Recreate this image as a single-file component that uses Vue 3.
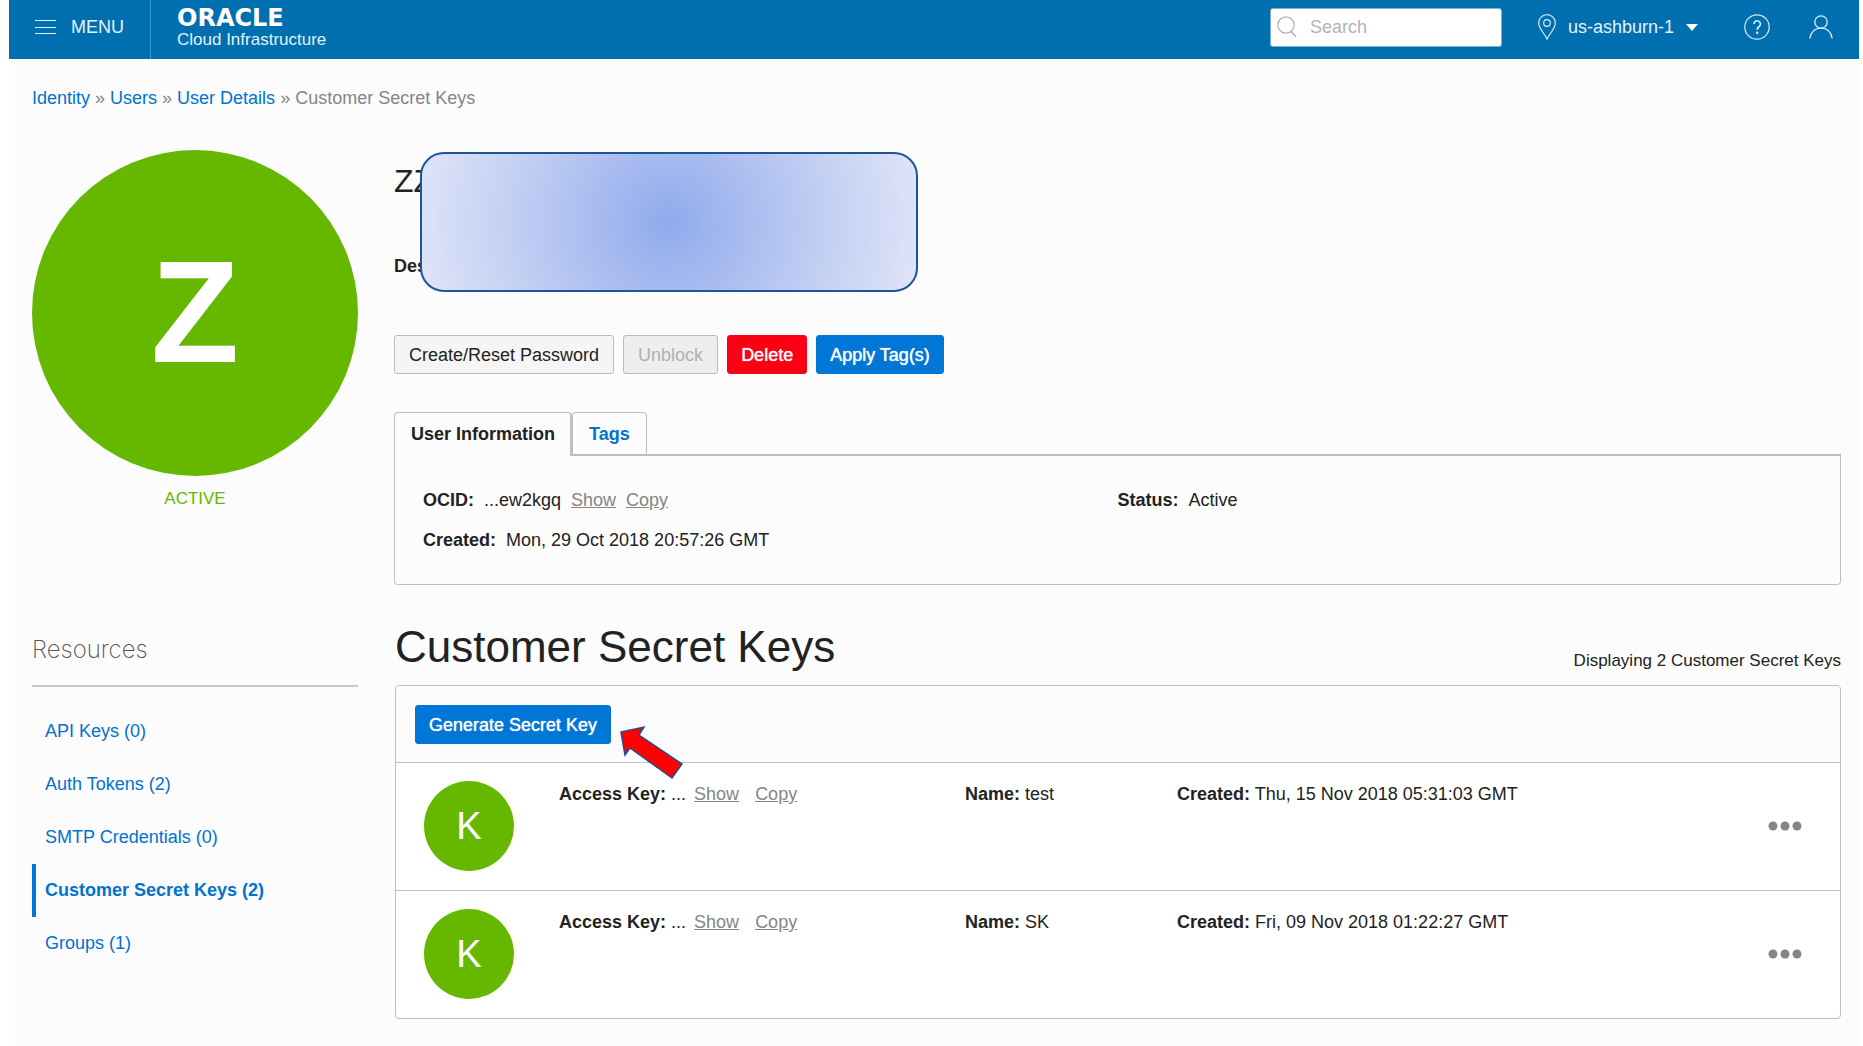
<script setup>
import { ref } from 'vue'

const search = ref('')

const resources = [
  { label: 'API Keys (0)' },
  { label: 'Auth Tokens (2)' },
  { label: 'SMTP Credentials (0)' },
  { label: 'Customer Secret Keys (2)', active: true },
  { label: 'Groups (1)' },
]

const keys = [
  { name: 'test', created: 'Thu, 15 Nov 2018 05:31:03 GMT' },
  { name: 'SK', created: 'Fri, 09 Nov 2018 01:22:27 GMT' },
]
</script>

<template>
  <div class="page">
    <header class="topbar">
      <button type="button" class="menu">
        <svg width="21" height="16" viewBox="0 0 21 16" aria-hidden="true">
          <path d="M0 1.5H21M0 8.5H21M0 14.5H21" stroke="#e3f2fa" stroke-width="1" fill="none" />
        </svg>
        MENU
      </button>
      <a href="#" class="brand">
        <span class="brand-name">ORACLE</span>
        <span class="brand-product">Cloud Infrastructure</span>
      </a>
      <div class="tools">
        <label class="search">
          <svg width="20" height="24" viewBox="0 0 20 24" aria-hidden="true">
            <circle cx="9" cy="10" r="8.200" fill="none" stroke="#adadad" stroke-width="1.200" />
            <path d="M14 16.500L19 21.500" stroke="#adadad" stroke-width="1.500" fill="none" />
          </svg>
          <input v-model="search" type="text" placeholder="Search" aria-label="Search" />
        </label>
        <button type="button" class="region">
          <svg width="18" height="26" viewBox="0 0 18 26" aria-hidden="true">
            <path d="M9 25C7 20 .7 15 .7 9a8.300 8.300 0 0 1 16.600 0C17.300 15 11 20 9 25Z" fill="none" stroke="#d6ecf7" stroke-width="1.200" />
            <circle cx="9" cy="9" r="3.300" fill="none" stroke="#d6ecf7" stroke-width="1.200" />
          </svg>
          <span>us-ashburn-1</span>
          <svg width="12" height="7" viewBox="0 0 12 7" aria-hidden="true">
            <path d="M0 0H12L6 7Z" fill="#fff" />
          </svg>
        </button>
        <button type="button" class="icon-button help" aria-label="Help">
          <svg width="26" height="26" viewBox="0 0 26 26" aria-hidden="true">
            <circle cx="13" cy="13" r="12.200" fill="none" stroke="#d6ecf7" stroke-width="1.200" />
            <path d="M10 10a3.200 3.200 0 1 1 5.200 2.500C13.800 13.500 13.200 14 13.200 16" fill="none" stroke="#e3f2fa" stroke-width="1.600" />
            <circle cx="13.200" cy="18.800" r="1.200" fill="#e3f2fa" />
          </svg>
        </button>
        <button type="button" class="icon-button" aria-label="Profile">
          <svg width="24" height="24" viewBox="0 0 24 24" aria-hidden="true">
            <circle cx="12" cy="7" r="6.200" fill="none" stroke="#d6ecf7" stroke-width="1.300" />
            <path d="M.8 23.500C2 17 6 13.200 12 13.200S22 17 23.200 23.500" fill="none" stroke="#d6ecf7" stroke-width="1.300" />
          </svg>
        </button>
      </div>
    </header>

    <main class="content">
      <nav class="crumbs" aria-label="Breadcrumb">
        <a href="#">Identity</a> » <a href="#">Users</a> » <a href="#">User Details</a> »
        <span>Customer Secret Keys</span>
      </nav>

      <div class="columns">
        <aside class="profile">
          <div class="avatar">Z</div>
          <div class="state">ACTIVE</div>
        </aside>

        <section class="details">
          <div class="identity">
            <h1>ZZ</h1>
            <p>Desc</p>
            <div class="mask"></div>
          </div>

          <div class="actions">
            <button type="button" class="btn">Create/Reset Password</button>
            <button type="button" class="btn" disabled>Unblock</button>
            <button type="button" class="btn danger">Delete</button>
            <button type="button" class="btn primary">Apply Tag(s)</button>
          </div>

          <div class="tabs">
            <button type="button" class="tab active">User Information</button>
            <button type="button" class="tab">Tags</button>
          </div>
          <div class="panel">
            <div class="facts">
              <div class="fact">
                <strong>OCID:</strong><span>...ew2kgq</span>
                <a href="#" class="quiet">Show</a><a href="#" class="quiet">Copy</a>
              </div>
              <div class="fact">
                <strong>Created:</strong><span>Mon, 29 Oct 2018 20:57:26 GMT</span>
              </div>
            </div>
            <div class="facts">
              <div class="fact"><strong>Status:</strong><span>Active</span></div>
            </div>
          </div>
        </section>
      </div>

      <div class="columns lower">
        <aside class="resources">
          <h3>Resources</h3>
          <ul>
            <li v-for="item in resources" :key="item.label">
              <a href="#" :class="{ active: item.active }">{{ item.label }}</a>
            </li>
          </ul>
        </aside>

        <section class="keys">
          <div class="keys-head">
            <h2>Customer Secret Keys</h2>
            <span class="count">Displaying 2 Customer Secret Keys</span>
          </div>
          <div class="list">
            <div class="toolbar">
              <button type="button" class="btn primary">Generate Secret Key</button>
              <svg class="pointer" width="68" height="56" viewBox="0 0 68 56" aria-hidden="true">
                <path d="M3 7L26 2L21 10L64 39L54 53L12 23L7 30Z" fill="#ff0000" stroke="#25508c" stroke-width="1.500" />
              </svg>
            </div>
            <div v-for="key in keys" :key="key.name" class="row">
              <div class="badge">K</div>
              <div class="cell access">
                <span><strong>Access Key:</strong> ...</span>
                <a href="#" class="quiet">Show</a>
                <a href="#" class="quiet">Copy</a>
              </div>
              <div class="cell"><strong>Name:</strong> {{ key.name }}</div>
              <div class="cell"><strong>Created:</strong> {{ key.created }}</div>
              <button type="button" class="icon-button more" aria-label="Actions">
                <svg width="34" height="10" viewBox="0 0 34 10" aria-hidden="true">
                  <circle cx="5" cy="5" r="4.500" fill="#858585" />
                  <circle cx="17" cy="5" r="4.500" fill="#858585" />
                  <circle cx="29" cy="5" r="4.500" fill="#858585" />
                </svg>
              </button>
            </div>
          </div>
        </section>
      </div>
    </main>
  </div>
</template>

<style>
body {
  margin: 0;
  background: #fff;
}
</style>

<style scoped>
.page {
  box-sizing: border-box;
  min-height: 100vh;
  margin: 0 4px 0 9px;
  background: #fcfcfc;
  color: #222;
  font: 18px/24px "Liberation Sans", Arial, sans-serif;
}

button,
input {
  font: inherit;
}

button {
  cursor: pointer;
}

a {
  color: #0073cf;
  text-decoration: none;
}

h1,
h2,
h3,
p,
ul {
  margin: 0;
  padding: 0;
}

.topbar {
  display: flex;
  height: 59px;
  background: #006fb0;
  color: #e3f2fa;
}

.menu {
  display: flex;
  align-items: center;
  gap: 15px;
  padding: 0 26px 6px;
  border: 0;
  border-right: 1px solid #3a9bce;
  background: none;
  color: inherit;
}

.brand {
  display: flex;
  flex-direction: column;
  padding: 8px 26px 0;
  color: #e3f2fa;
}

.brand-name {
  color: #fff;
  font: bold 24px/20px "DejaVu Sans", sans-serif;
}

.brand-product {
  font-size: 17px;
}

.tools {
  display: flex;
  align-items: center;
  margin-left: auto;
  padding: 0 26px 5px 0;
}

.search {
  display: flex;
  align-items: center;
  gap: 8px;
  box-sizing: border-box;
  width: 232px;
  height: 39px;
  margin-right: 36px;
  padding: 0 10px 0 6px;
  border: 1px solid #7fb0d0;
  border-radius: 3px;
  background: #fff;
}

.search input {
  min-width: 0;
  flex: 1;
  padding: 0 0 0 5px;
  border: 0;
  outline: 0;
  background: none;
}

.search input::placeholder {
  color: #b3b3b3;
}

.region {
  display: flex;
  align-items: center;
  gap: 12px;
  margin-right: 46px;
  padding: 0;
  border: 0;
  background: none;
  color: inherit;
}

.icon-button {
  display: block;
  padding: 0;
  border: 0;
  background: none;
}

.icon-button svg {
  display: block;
}

.help {
  margin-right: 39px;
}

.content {
  padding: 27px 18px 27px 23px;
}

.crumbs {
  color: #858585;
}

.columns {
  display: grid;
  grid-template-columns: 326px minmax(0, 1fr);
  column-gap: 36px;
  margin-top: 40px;
}

.lower {
  column-gap: 37px;
  margin-top: 36px;
}

.avatar {
  display: grid;
  place-items: center;
  height: 326px;
  border-radius: 50%;
  background: #66b700;
  color: #fff;
  font-size: 144px;
  font-weight: bold;
  line-height: 160px;
}

.state {
  margin-top: 11px;
  color: #66b700;
  font-size: 17px;
  text-align: center;
}

.identity {
  position: relative;
  padding: 11px 0 57px;
}

.identity h1 {
  font-size: 32px;
  font-weight: normal;
  line-height: 40px;
}

.identity p {
  margin-top: 53px;
  font-weight: bold;
}

.mask {
  position: absolute;
  top: 2px;
  left: 26px;
  box-sizing: border-box;
  width: 498px;
  height: 140px;
  border: 2px solid #1f5597;
  border-radius: 24px;
  background: radial-gradient(circle, #8faaec 0, #aabdf0 80px, #c3d0f3 160px, #dde3f8 250px);
}

.actions {
  display: flex;
  gap: 9px;
}

.btn {
  height: 39px;
  padding: 0 14px;
  border: 1px solid #b6bdc4;
  border-radius: 3px;
  background: #f5f5f5;
  color: #222;
}

.btn:disabled {
  background: #eee;
  color: #b0b0b0;
  cursor: default;
}

.btn.danger,
.btn.primary {
  padding: 0 13px;
  border-color: #0076d6;
  background: #0076d6;
  color: #fff;
  text-shadow: 0 0 1px #fff;
}

.btn.danger {
  border-color: #fa0012;
  background: #fa0012;
}

.tabs {
  display: flex;
  height: 42px;
  margin-top: 38px;
}

.tab {
  padding: 0 16px;
  border: 1px solid #b8c0c8;
  border-bottom: 0;
  border-radius: 4px 4px 0 0;
  background: none;
  color: #0073cf;
  font-weight: bold;
}

.tab.active {
  z-index: 1;
  height: 44px;
  padding: 0 15px 2px 16px;
  border-right-width: 2px;
  background: #fcfcfc;
  color: #222;
}

.panel {
  display: grid;
  grid-template-columns: 1fr 1fr;
  padding: 32px 28px;
  border: 1px solid #b8c0c8;
  border-top: 2px solid #bdbdbd;
  border-radius: 0 0 4px 4px;
}

.facts {
  display: flex;
  flex-direction: column;
  gap: 16px;
}

.fact {
  display: flex;
  gap: 10px;
}

.quiet {
  color: #858585;
  text-decoration: underline;
}

.resources h3 {
  padding: 13px 0 19px;
  border-bottom: 2px solid #c2cad1;
  color: #555;
  font: 200 24px/32px Inter, sans-serif;
}

.resources ul {
  margin-top: 18px;
  list-style: none;
}

.resources a {
  display: block;
  padding: 14px 0 15px 9px;
  border-left: 4px solid transparent;
}

.resources a.active {
  border-left-color: #0076d6;
  font-weight: bold;
}

.keys-head {
  display: flex;
  align-items: flex-end;
  justify-content: space-between;
  margin-bottom: 12px;
}

.keys-head h2 {
  font-size: 44px;
  font-weight: normal;
  line-height: 52px;
}

.count {
  font-size: 17px;
}

.list {
  border: 1px solid #b8c0c8;
  border-radius: 4px;
  background: #fff;
}

.toolbar {
  position: relative;
  padding: 19px 19px 18px;
  border-radius: 4px 4px 0 0;
  background: #fbfbfb;
}

.pointer {
  position: absolute;
  top: 39px;
  left: 222px;
}

.row {
  display: grid;
  grid-template-columns: 135px 406fr 212fr 591fr 34px;
  padding: 18px 38px 19px 28px;
  border-top: 1px solid #b8c0c8;
}

.cell {
  padding-top: 1px;
}

.badge {
  display: grid;
  place-items: center;
  width: 90px;
  height: 90px;
  border-radius: 50%;
  background: #66b700;
  color: #fff;
  font-size: 38px;
  line-height: 40px;
}

.access {
  display: flex;
  gap: 16px;
}

.access span {
  margin-right: -8px;
}

.more {
  align-self: center;
}
</style>
